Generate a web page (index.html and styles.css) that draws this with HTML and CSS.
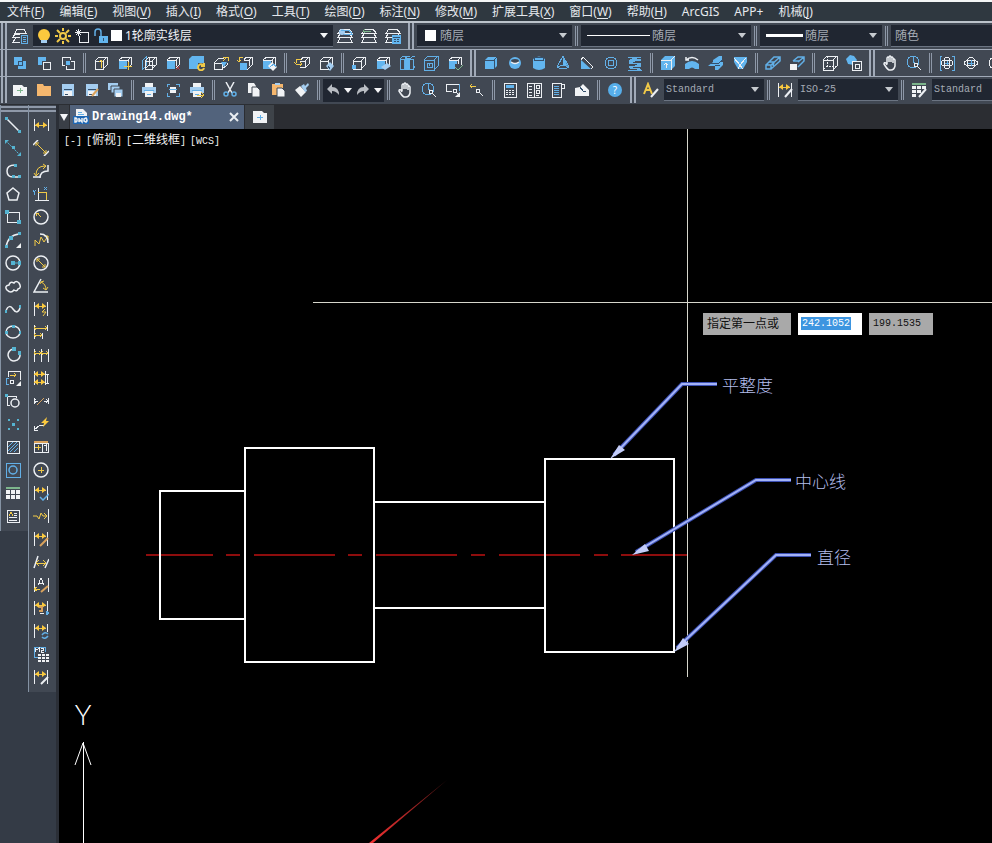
FILE: index.html
```html
<!DOCTYPE html>
<html lang="zh-CN">
<head>
<meta charset="utf-8">
<meta name="viewport" content="width=device-width, initial-scale=1">
<title>Drawing14.dwg</title>
<link rel="stylesheet" href="styles.css">
</head>
<body>
<svg class="sprite" aria-hidden="true">
  <symbol id="cube" viewBox="0 0 16 16"><path d="M2 6h8v8H2zM2 6l4-4h8v8l-4 4M10 6l4-4"/></symbol>
  <symbol id="box" viewBox="0 0 16 16"><path class="fb" d="M2 6h8v8H2z"/><path class="w" d="M2 5l4-3h8v8l-3 3M11 5l3-3M2 5h9v8"/></symbol>
  <symbol id="dim" viewBox="0 0 16 16"><path class="w" d="M1 1v14M14 1v14"/><path class="y" d="M2 5h11"/><path class="fy" d="M2 5l4-3v6zM13 5l-4-3v6z"/></symbol>
  <symbol id="hand" viewBox="0 0 16 16"><path class="ws" d="M5 9V3q1-2 2 0v4V2q1-2 2 0v5V3q1-2 2 0v5-3q1-2 2 0v6q-1 4-4 4H7Q5 14 2 9q0-2 2-1l1 2"/></symbol>
  <symbol id="zoomrt" viewBox="0 0 16 16"><circle class="b" cx="7" cy="7" r="6"/><path class="b" d="M7 2v5l4 2"/><circle class="w" cx="10" cy="10" r="2"/><path class="w" d="M12 12l3 3"/></symbol>
  <symbol id="layers" viewBox="0 0 16 16"><path class="w" d="M4 1h8l3 4H1zM3 6l-2 3h14l-2-3M3 10l-2 4h14l-2-4"/></symbol>
  <symbol id="printer" viewBox="0 0 16 16"><path class="fw" d="M4 1h8v4H4z"/><path class="fl" d="M1 5h14v6H1z"/><path class="fw" d="M4 9h8v6H4z"/><path class="b" d="M3 8h10M6 12h4"/></symbol>
  <symbol id="disk" viewBox="0 0 16 16"><path class="fl" d="M2 2h12v12H2z"/><path class="fw" d="M4 9h8v5H4z"/><path class="d" d="M4 7h8M5 12h3"/></symbol>
</svg>

<nav class="menu" aria-label="主菜单">
  <a href="#">文件(<u>F</u>)</a><a href="#">编辑(<u>E</u>)</a><a href="#">视图(<u>V</u>)</a><a href="#">插入(<u>I</u>)</a><a href="#">格式(<u>O</u>)</a><a href="#">工具(<u>T</u>)</a><a href="#">绘图(<u>D</u>)</a><a href="#">标注(<u>N</u>)</a><a href="#">修改(<u>M</u>)</a><a href="#">扩展工具(<u>X</u>)</a><a href="#">窗口(<u>W</u>)</a><a href="#">帮助(<u>H</u>)</a><a href="#">ArcGIS</a><a href="#">APP+</a><a href="#">机械(<u>J</u>)</a>
</nav>

<div class="bar" role="toolbar" aria-label="图层和特性">
  <span class="grip"></span>
  <button class="tool" aria-label="图层特性管理器"><svg viewBox="0 0 16 16"><path class="w" d="M3 5l2-4h7l2 4zM8 6H3L1 9h7M4 10l-3 4h7"/><path class="fd b" d="M9 7h6v8H9z"/><path class="b" d="M11 9h3M11 11h3M11 13h3"/></svg></button>
  <div class="combo layer">
    <svg viewBox="0 0 16 16"><circle class="fy" cx="8" cy="7" r="6"/><path class="fl" d="M5 12h6v3H5z"/></svg>
    <svg viewBox="0 0 16 16"><circle class="y2" cx="8" cy="8" r="3"/><path class="y2" d="M8 0v3M8 13v3M0 8h3M13 8h3M2 2l3 3M11 11l3 3M14 2l-3 3M5 11l-3 3"/></svg>
    <svg viewBox="0 0 16 16"><path class="w" d="M8 4h6v10H5V8"/><path class="w thin" d="M4 1v7M1 4h7M2 2l5 5M7 2L2 7"/></svg>
    <svg viewBox="0 0 16 16"><path class="b2" d="M2 8V4q0-3 3-3t3 3v4"/><path class="fb" d="M6 8h9v7H6z"/><path class="d" d="M10 10v3"/></svg>
    <span class="swatch"></span>
    <select aria-label="图层"><option>1轮廓实线层</option></select>
  </div>
  <button class="tool" aria-label="置为当前"><svg viewBox="0 0 16 16"><use href="#layers"/><circle class="fl" cx="5" cy="4" r="3"/><path class="b" d="M4 2h8l3 4H7"/></svg></button>
  <button class="tool" aria-label="上一个图层"><svg viewBox="0 0 16 16"><use href="#layers"/><path class="g" d="M10 3H2M4 1L2 3l2 2"/></svg></button>
  <button class="tool" aria-label="图层状态"><svg viewBox="0 0 16 16"><use href="#layers"/><path class="fb" d="M7 7h9v9H7z"/><path class="d" d="M8 9h7M9 11h2M12 11h2M9 13h2M12 13h2"/></svg></button>
  <span class="sep wide"></span>
  <div class="combo color"><span class="swatch"></span><select aria-label="颜色"><option>随层</option></select></div>
  <span class="sep"></span>
  <div class="combo ltype"><span class="rule"></span><select aria-label="线型"><option>随层</option></select></div>
  <span class="sep"></span>
  <div class="combo weight"><span class="rule thick"></span><select aria-label="线宽"><option>随层</option></select></div>
  <span class="sep"></span>
  <div class="combo rest"><select aria-label="打印样式"><option>随色</option></select></div>
</div>

<div class="bar" role="toolbar" aria-label="建模">
  <span class="grip"></span>
  <button class="tool" aria-label="并集"><svg viewBox="0 0 16 16"><path class="fb" d="M2 2h8v8H2zM6 6h8v8H6z"/><path class="d" d="M6 6h4v4H6z"/></svg></button>
  <button class="tool" aria-label="差集"><svg viewBox="0 0 16 16"><path class="fb" d="M2 2h8v4H6v4H2z"/><path class="w" d="M7 7h7v7H7z"/></svg></button>
  <button class="tool" aria-label="交集"><svg viewBox="0 0 16 16"><path class="w" d="M5 10H2V2h8v3M11 6h3v8H6v-3"/><path class="fb" d="M6 6h4v4H6z"/></svg></button>
  <span class="sep"></span>
  <button class="tool" aria-label="拉伸面"><svg viewBox="0 0 16 16"><use class="w" href="#cube"/><path class="y" d="M8 13V5M6 7l2-2 2 2"/></svg></button>
  <button class="tool" aria-label="移动面"><svg viewBox="0 0 16 16"><use href="#box"/><path class="y" d="M11 7v8M7 11h8"/></svg></button>
  <button class="tool" aria-label="偏移面"><svg viewBox="0 0 16 16"><path class="b" d="M1 6l4-4v9l-4 4z"/><path class="w" d="M4 6h7v8H4zM4 6l4-4h7v8l-4 4M11 6l4-4M8 2v8h7M4 14l4-4"/></svg></button>
  <button class="tool" aria-label="删除面"><svg viewBox="0 0 16 16"><use href="#box"/><path class="r" d="M11 11l4 4M15 11l-4 4"/></svg></button>
  <button class="tool" aria-label="旋转面"><svg viewBox="0 0 16 16"><path class="fb" d="M0 4l3-3h12v10l-3 3H0z"/><path class="fd" d="M9 8h7v8H9z"/><path class="y2" d="M14 10a3 3 0 1 0 1 3M15 8v3h-3"/></svg></button>
  <button class="tool" aria-label="倾斜面"><svg viewBox="0 0 16 16"><path class="w" d="M1 8h8v6H1zM1 8l5-5h5M9 14l5-4V8"/><path class="fb" d="M8 7h6l-3 5z"/><path class="y" d="M10 6l4-4M10 2h5v4"/></svg></button>
  <button class="tool" aria-label="复制面"><svg viewBox="0 0 16 16"><path class="fb" d="M3 8h7v7H3z"/><path class="w" d="M7 5l2-3h6v8l-5 5M7 5h5v6M12 5l3-3"/><path class="y" d="M6 2H2v5M0 5l2 2 2-2"/></svg></button>
  <button class="tool" aria-label="着色面"><svg viewBox="0 0 16 16"><use href="#box"/><path class="fw" d="M7 11l4-4 5 5-4 4z"/><path class="b" d="M9 12l4-3 2 3"/></svg></button>
  <span class="sep"></span>
  <button class="tool" aria-label="复制边"><svg viewBox="0 0 16 16"><path class="w" d="M6 12h5V6H6M7 5l2-3h6v7l-4 4M11 6l4-4"/><path class="y" d="M7 4H2v4M0 7l2 2h6M6 7l2 2-2 2"/></svg></button>
  <button class="tool" aria-label="着色边"><svg viewBox="0 0 16 16"><use class="w" href="#cube"/><path class="fl" d="M8 11l4-4 4 4-4 5z"/><path class="d" d="M10 11l2 3"/></svg></button>
  <span class="sep"></span>
  <button class="tool" aria-label="压印"><svg viewBox="0 0 16 16"><use class="w" href="#cube"/><path class="fb" d="M1 10h4v4H1z"/></svg></button>
  <button class="tool" aria-label="清除"><svg viewBox="0 0 16 16"><use href="#box"/><path class="fl" d="M6 12l6-4 4 3-6 4z"/></svg></button>
  <button class="tool" aria-label="分割"><svg viewBox="0 0 16 16"><path class="fb" d="M6 3h5v12H6z"/><path class="b" d="M1 4h4v10H1zM1 4l3-3h3M11 4h3v10h-4M11 4l3-3h2v10l-2 3M6 4l2-3h3"/></svg></button>
  <button class="tool" aria-label="抽壳"><svg viewBox="0 0 16 16"><path class="b" d="M1 5h10v10H1zM1 5l4-4h10v10l-4 4M11 5l4-4M4 8h5v4H4zM6 8v3"/></svg></button>
  <button class="tool" aria-label="检查"><svg viewBox="0 0 16 16"><use href="#box"/><path class="fd" d="M8 9h6v6H8z"/><path class="g" d="M8 12l3 3 5-5"/></svg></button>
  <span class="sep wide"></span>
  <button class="tool" aria-label="长方体"><svg viewBox="0 0 16 16"><path class="fb" d="M2 5l3-3h9v9l-3 3H2z"/><path class="d" d="M2 5h9v9M11 5l3-3"/></svg></button>
  <button class="tool" aria-label="球体"><svg viewBox="0 0 16 16"><ellipse class="fb" cx="8" cy="8" rx="6" ry="6"/><ellipse class="fd" cx="8" cy="6" rx="4" ry="2"/><path class="ws" d="M4 7q4 3 8 0"/></svg></button>
  <button class="tool" aria-label="圆柱体"><svg viewBox="0 0 16 16"><path class="fb" d="M2 4q6-5 12 0v9q-6 4-12 0z"/><ellipse class="d" cx="8" cy="4" rx="5" ry="2"/></svg></button>
  <button class="tool" aria-label="圆锥体"><svg viewBox="0 0 16 16"><path class="b" d="M8 1L2 12q6 4 12 0zM2 12q6-3 12 0"/><path class="fb" d="M8 2l5 9-5-1z"/></svg></button>
  <button class="tool" aria-label="楔体"><svg viewBox="0 0 16 16"><path class="fb" d="M2 5l10 9H2z"/><path class="w thin" d="M2 5l2-3 10 10-2 2"/></svg></button>
  <button class="tool" aria-label="圆环体"><svg viewBox="0 0 16 16"><circle class="b" cx="8" cy="8" r="6"/><circle class="b" cx="8" cy="8" r="3"/></svg></button>
  <button class="tool" aria-label="螺旋"><svg viewBox="0 0 16 16"><path class="b" d="M1 2h13M2 5h12M2 8h12M2 11h12M1 15h14M1 2l13 3M14 5L2 7l12 3M14 10L2 12l12 3"/><path class="b" d="M3 4h10M3 13h10"/></svg></button>
  <span class="sep"></span>
  <button class="tool" aria-label="拉伸"><svg viewBox="0 0 16 16"><path class="fb" d="M1 5l4-4h10v10l-4 4H1z"/><path class="w thin" d="M1 5h10v10M11 5l4-4M6 13V8M4 10l2-2 2 2"/></svg></button>
  <button class="tool" aria-label="旋转"><svg viewBox="0 0 16 16"><path class="ws" d="M2 5q6-5 12 0M2 2v3h3"/><path class="fb" d="M1 9q7-6 14 0v5h-4q-3-3-6 0H1z"/></svg></button>
  <button class="tool" aria-label="扫掠"><svg viewBox="0 0 16 16"><path class="fb" d="M5 5l6-4h3v5l-2 1h3v3l-5 5H7v-4H0l5-4z"/><path class="d" d="M2 8h9l4-3M7 11l5-1"/></svg></button>
  <button class="tool" aria-label="放样"><svg viewBox="0 0 16 16"><path class="fb" d="M2 2h13v5l-4 7H6L2 7z"/><path class="w thin" d="M2 3l6 7 6-7M6 14l2-4 3 4"/></svg></button>
  <span class="sep"></span>
  <button class="tool" aria-label="多段体"><svg viewBox="0 0 16 16"><path class="b2" d="M1 10h5v4H1zM1 10l8-8h6v4l-9 8M6 10l9-8M4 7h5l-1 4"/></svg></button>
  <button class="tool" aria-label="按住并拖动"><svg viewBox="0 0 16 16"><path class="b2" d="M4 6l5-4h6v4l-6 6M9 7l6-5M4 6h6"/><path class="fw" d="M1 9h7v6H1z"/></svg></button>
  <span class="sep"></span>
  <button class="tool" aria-label="截面"><svg viewBox="0 0 16 16"><path class="w" d="M1 5h10v10H1zM1 5l4-4h10v10l-4 4M11 5l4-4"/><path class="w dots" d="M5 1v10h10M5 11l-4 4"/></svg></button>
  <button class="tool" aria-label="实体编辑"><svg viewBox="0 0 16 16"><path class="fb" d="M0 4l4-4 4 1 3 4-3 5-6-1z"/><path class="fd w" d="M6 6h9v9H6z"/><path class="w" d="M9 9h4v4H9z"/></svg></button>
  <span class="sep wide"></span>
  <button class="tool" aria-label="平移"><svg viewBox="0 0 16 16"><use href="#hand"/></svg></button>
  <button class="tool" aria-label="缩放"><svg viewBox="0 0 16 16"><use href="#zoomrt"/></svg></button>
  <span class="sep"></span>
  <button class="tool" aria-label="受约束的动态观察"><svg viewBox="0 0 16 16"><path class="b" d="M3 1H1v14h2M13 1h2v14h-2"/><ellipse class="w" cx="8" cy="8" rx="6" ry="3"/><ellipse class="w" cx="8" cy="8" rx="3" ry="6"/><path class="b" d="M8 6v4M6 8h4"/></svg></button>
  <button class="tool" aria-label="自由动态观察"><svg viewBox="0 0 16 16"><ellipse class="w" cx="8" cy="8" rx="7" ry="3"/><ellipse class="w" cx="8" cy="8" rx="4" ry="6"/><path class="b" d="M8 5v6M5 8h6"/></svg></button>
  <button class="tool" aria-label="连续动态观察"><svg viewBox="0 0 16 16"><circle class="w" cx="8" cy="8" r="6"/></svg></button>
</div>

<div class="bar" role="toolbar" aria-label="标准和样式">
  <span class="grip"></span>
  <button class="tool" aria-label="新建"><svg viewBox="0 0 16 16"><path class="fw" d="M1 3h9l2 2h3v9H1z"/><path class="g" d="M8 6v5M5 8h6"/></svg></button>
  <button class="tool" aria-label="打开"><svg viewBox="0 0 16 16"><path class="fo" d="M1 2h6l1 2h7v10H1z"/></svg></button>
  <button class="tool" aria-label="保存"><svg viewBox="0 0 16 16"><use href="#disk"/></svg></button>
  <button class="tool" aria-label="另存为"><svg viewBox="0 0 16 16"><use href="#disk"/><path class="o2" d="M8 14l6-7"/></svg></button>
  <button class="tool" aria-label="全部保存"><svg viewBox="0 0 16 16"><path class="fl" d="M0 1h10v7H0z"/><path class="fl ds" d="M3 4h9v7H3z"/><path class="fl ds" d="M6 7h9v8H6z"/><path class="fw" d="M8 11h5v4H8z"/></svg></button>
  <span class="sep"></span>
  <button class="tool" aria-label="打印"><svg viewBox="0 0 16 16"><use href="#printer"/></svg></button>
  <button class="tool" aria-label="打印预览"><svg viewBox="0 0 16 16"><path class="b" d="M5 2H2v3M11 2h3v3M2 11v3h3M14 11v3h-3"/><path class="fw" d="M5 5h6v6H5z"/><path class="b" d="M4 7h8"/></svg></button>
  <button class="tool" aria-label="发布"><svg viewBox="0 0 16 16"><use href="#printer"/><path class="y" d="M8 13h7M12 10l3 3-3 3"/></svg></button>
  <span class="sep"></span>
  <button class="tool" aria-label="剪切"><svg viewBox="0 0 16 16"><path class="ws" d="M4 0l6 11M12 0L6 11"/><circle class="b2" cx="4" cy="12" r="2"/><circle class="b2" cx="12" cy="12" r="2"/></svg></button>
  <button class="tool" aria-label="复制"><svg viewBox="0 0 16 16"><path class="fw" d="M2 1h6l2 3v7H2z"/><path class="fw ds" d="M6 5h5l3 3v7H6z"/></svg></button>
  <button class="tool" aria-label="粘贴"><svg viewBox="0 0 16 16"><path class="fo" d="M2 2h11v11H2z"/><path class="fl" d="M5 1h5v2H5z"/><path class="fw ds" d="M7 6h5l3 3v6H7z"/></svg></button>
  <button class="tool" aria-label="特性匹配"><svg viewBox="0 0 16 16"><path class="fw" d="M1 8l5-4 6 6-5 5z"/><path class="fl" d="M7 4l3-2 1 2 3-3 1 2-3 3 1 3-2 1z"/></svg></button>
  <span class="sep"></span>
  <div class="history">
    <button class="tool" aria-label="放弃"><svg viewBox="0 0 16 16"><path class="fg" d="M7 2v3q7 0 7 8-3-4-7-4v3L2 7z"/></svg></button>
    <button class="drop" aria-label="放弃列表"></button>
    <button class="tool" aria-label="重做"><svg viewBox="0 0 16 16"><path class="fg" d="M9 2v3q-7 0-7 8 3-4 7-4v3l5-5z"/></svg></button>
    <button class="drop" aria-label="重做列表"></button>
  </div>
  <span class="sep"></span>
  <button class="tool" aria-label="实时平移"><svg viewBox="0 0 16 16"><use href="#hand"/></svg></button>
  <button class="tool" aria-label="实时缩放"><svg viewBox="0 0 16 16"><use href="#zoomrt"/></svg></button>
  <button class="tool" aria-label="窗口缩放"><svg viewBox="0 0 16 16"><path class="b" d="M1 2h13v7"/><path class="w" d="M1 2v7h6M1 2h13"/><circle class="w" cx="10" cy="9" r="2"/><path class="w" d="M12 11l3 3"/><path class="fw" d="M15 10v5h-5z"/></svg></button>
  <button class="tool" aria-label="缩放上一个"><svg viewBox="0 0 16 16"><path class="y" d="M7 4H1M3 2L1 4l2 2"/><circle class="w" cx="9" cy="9" r="2"/><path class="w" d="M11 11l3 3"/></svg></button>
  <span class="sep"></span>
  <button class="tool" aria-label="特性"><svg viewBox="0 0 16 16"><path class="w" d="M2 1h12v14H2z"/><path class="fb" d="M4 3h8v3H4z"/><path class="w dots" d="M4 8h8M4 10h8M4 12h8"/></svg></button>
  <button class="tool" aria-label="设计中心"><svg viewBox="0 0 16 16"><path class="w" d="M1 1h14v14H1zM8 1v14M10 3h3v3h-3zM10 8h3v3h-3zM3 4h3M3 7h3M3 10h3M3 13h3M10 13h3"/></svg></button>
  <button class="tool" aria-label="工具选项板"><svg viewBox="0 0 16 16"><path class="w" d="M2 1h9v14H2zM11 2h3v4h-3"/><path class="b" d="M4 4h5M4 6h5M4 8h5M4 10h5M4 12h5"/></svg></button>
  <button class="tool" aria-label="标记集"><svg viewBox="0 0 16 16"><path class="fw" d="M1 6l5-1 3-3 6 6v6H1z"/><path class="d" d="M6 5l3 4h3"/></svg></button>
  <span class="sep"></span>
  <button class="tool" aria-label="帮助"><span class="help">?</span></button>
  <span class="sep wide"></span>
  <button class="tool" aria-label="文字样式"><svg viewBox="0 0 16 16"><path class="y2" d="M1 12L5 2l4 10M3 8h5"/><path class="w2" d="M8 15l7-8"/></svg></button>
  <div class="combo style"><select aria-label="文字样式"><option>Standard</option></select></div>
  <span class="sep"></span>
  <button class="tool" aria-label="标注样式"><svg viewBox="0 0 16 16"><use href="#dim"/><path class="w2" d="M8 15l7-8"/></svg></button>
  <div class="combo style"><select aria-label="标注样式"><option>ISO-25</option></select></div>
  <span class="sep"></span>
  <button class="tool" aria-label="表格样式"><svg viewBox="0 0 16 16"><path class="g2" d="M1 2h14"/><path class="fw" d="M1 4h4v3H1zM6 4h4v3H6zM11 4h4v3h-4zM1 8h4v3H1zM6 8h4v3H6zM1 12h4v3H1z"/><path class="w2" d="M8 15l7-8"/></svg></button>
  <div class="combo style rest"><select aria-label="表格样式"><option>Standard</option></select></div>
</div>

<main class="work">
  <aside class="palettes">
    <div class="palette" role="toolbar" aria-label="绘图">
      <button class="ptool" aria-label="直线"><svg viewBox="0 0 16 16"><path class="ws" d="M2 2l12 12"/><path class="fc" d="M0 0h3v3H0zM13 13h3v3h-3z"/></svg></button>
      <button class="ptool" aria-label="构造线"><svg viewBox="0 0 16 16"><path class="c dots" d="M1 1l14 14"/><path class="fc" d="M0 0h4L0 4zM16 16h-4l4-4zM7 6h3v3H7z"/></svg></button>
      <button class="ptool" aria-label="多段线"><svg viewBox="0 0 16 16"><path class="ws" d="M10 2Q2 2 2 8t6 6h5"/><path class="fc" d="M9 1h3v3H9zM7 12h3v3H7zM13 12h3v3h-3z"/></svg></button>
      <button class="ptool" aria-label="正多边形"><svg viewBox="0 0 16 16"><path class="ws" d="M8 2l6 5-2 7H4L2 7z"/></svg></button>
      <button class="ptool" aria-label="矩形"><svg viewBox="0 0 16 16"><path class="w" d="M2 3h12v10H2z"/><path class="fc" d="M0 1h4v4H0zM12 11h4v4h-4z"/></svg></button>
      <button class="ptool" aria-label="圆弧"><svg viewBox="0 0 16 16"><path class="ws" d="M1 15Q3 3 14 2"/><path class="fc" d="M0 13h3v3H0zM4 4h4v4H4zM13 0h3v3h-3z"/><path class="fw" d="M16 11v5h-5z"/></svg></button>
      <button class="ptool" aria-label="圆"><svg viewBox="0 0 16 16"><circle class="ws" cx="8" cy="8" r="7"/><path class="c" d="M8 8h6"/><path class="fc" d="M6 6h4v4H6zM13 6h3v4h-3z"/></svg></button>
      <button class="ptool" aria-label="修订云线"><svg viewBox="0 0 16 16"><path class="ws" d="M2 12q-3-4 2-5 1-4 5-2 2-3 5 0 3 5-1 6-1 3-4 1-3 4-7 0z"/></svg></button>
      <button class="ptool" aria-label="样条曲线"><svg viewBox="0 0 16 16"><path class="ws" d="M1 10C3 4 6 5 8 8s5 5 7-1"/><path class="fc" d="M0 9h2v3H0zM14 4h2v3h-2z"/></svg></button>
      <button class="ptool" aria-label="椭圆"><svg viewBox="0 0 16 16"><ellipse class="ws" cx="8" cy="8" rx="7" ry="6"/><path class="fc" d="M7 1h3v3H7zM0 7h3v3H0zM14 7h2v3h-2z"/></svg></button>
      <button class="ptool" aria-label="椭圆弧"><svg viewBox="0 0 16 16"><path class="ws" d="M8 2a6 6 0 1 0 7 5"/><path class="fc" d="M7 0h4v4H7zM13 4h3v4h-3z"/></svg></button>
      <button class="ptool" aria-label="插入块"><svg viewBox="0 0 16 16"><path class="w" d="M3 7V1h12v9"/><path class="b" d="M4 8H1v6h3"/><path class="y" d="M5 5h6M9 3l2 2-2 2"/><circle class="w" cx="7" cy="12" r="2"/><path class="fw" d="M16 11v5h-5z"/></svg></button>
      <button class="ptool" aria-label="创建块"><svg viewBox="0 0 16 16"><path class="w" d="M5 12H2V3h9v2"/><circle class="ws" cx="10" cy="10" r="4"/><path class="fc" d="M0 1h3v3H0z"/></svg></button>
      <button class="ptool" aria-label="点"><svg viewBox="0 0 16 16"><path class="fc" d="M3 3h2v2H3zM12 3h2v2h-2zM7 7h3v3H7zM3 12h2v2H3zM12 12h2v2h-2z"/></svg></button>
      <button class="ptool" aria-label="图案填充"><svg viewBox="0 0 16 16"><path class="w" d="M2 2h12v12H2z"/><path class="b" d="M3 8l5-5M3 12l9-9M5 13l8-8M9 13l4-4"/></svg></button>
      <button class="ptool" aria-label="面域"><svg viewBox="0 0 16 16"><path class="b" d="M1 1h14v14H1z"/><circle class="bs" cx="8" cy="8" r="4"/></svg></button>
      <button class="ptool" aria-label="表格"><svg viewBox="0 0 16 16"><path class="g2" d="M1 3h14"/><path class="fw" d="M1 5h4v4H1zM6 5h4v4H6zM11 5h4v4h-4zM1 10h4v4H1zM6 10h4v4H6zM11 10h4v4h-4z"/></svg></button>
      <button class="ptool" aria-label="多行文字"><svg viewBox="0 0 16 16"><path class="w" d="M2 2h12v12H2zM4 9h8M4 12h8M9 5h3M9 7h3"/><path class="y" d="M4 8l2-4 2 4"/></svg></button>
    </div>
    <div class="palette" role="toolbar" aria-label="标注">
      <button class="ptool" aria-label="线性"><svg viewBox="0 0 16 16"><path class="w" d="M1 2v12M15 2v12"/><path class="y" d="M2 8h12"/><path class="fy" d="M2 8l4-3v6zM14 8l-4-3v6z"/></svg></button>
      <button class="ptool" aria-label="对齐"><svg viewBox="0 0 16 16"><path class="ws" d="M0 5l5-5M11 16l5-5"/><path class="ys" d="M3 3l10 10M3 6V3h3M10 13h3v-3"/></svg></button>
      <button class="ptool" aria-label="弧长"><svg viewBox="0 0 16 16"><path class="ws" d="M7 15q0-7 8-7V2M0 14h7"/><path class="ys" d="M3 12Q3 3 12 3M1 10l2 3 3-3M10 1l3 2-3 3"/></svg></button>
      <button class="ptool" aria-label="坐标"><svg viewBox="0 0 16 16"><path class="w" d="M5 2v13M2 14h14"/><path class="y" d="M5 6h8v8"/><path class="b" d="M11 1l3 3M14 1l-3 3M0 4l1 2 2-2M1 6v3"/></svg></button>
      <button class="ptool" aria-label="半径"><svg viewBox="0 0 16 16"><circle class="ws" cx="8" cy="8" r="7"/><path class="y" d="M8 8L4 4M3 7V4h3"/></svg></button>
      <button class="ptool" aria-label="折弯"><svg viewBox="0 0 16 16"><path class="ys" d="M2 14V8l4 4 2-7 3 5 4-6M11 4h4v4"/><path class="ws" d="M7 2q8 0 8 9"/></svg></button>
      <button class="ptool" aria-label="直径"><svg viewBox="0 0 16 16"><circle class="ws" cx="8" cy="8" r="7"/><path class="ys" d="M4 4l8 8M4 7V4h3M9 12h3V9"/></svg></button>
      <button class="ptool" aria-label="角度"><svg viewBox="0 0 16 16"><path class="ws" d="M8 1L1 14h14"/><path class="ys" d="M8 4q5 2 5 8M7 6l1-2 3-1M10 10l3 2 2-3"/></svg></button>
      <button class="ptool" aria-label="快速标注"><svg viewBox="0 0 16 16"><use href="#dim"/><path class="ys" d="M12 8l-3 3h4l-3 4"/></svg></button>
      <button class="ptool" aria-label="基线"><svg viewBox="0 0 16 16"><path class="w" d="M1 1v14M14 1v6M9 9v6"/><path class="y" d="M1 4h13M3 2L1 4l2 2M12 2l2 2-2 2M1 11h8M3 9l-2 2 2 2M7 9l2 2-2 2"/></svg></button>
      <button class="ptool" aria-label="连续"><svg viewBox="0 0 16 16"><path class="w" d="M1 2v13M8 2v13M15 2v13"/><path class="y" d="M1 6h14M3 4L1 6l2 2M6 4l2 2-2 2M10 4L8 6l2 2M13 4l2 2-2 2"/></svg></button>
      <button class="ptool" aria-label="等距标注"><svg viewBox="0 0 16 16"><path class="w" d="M1 1v14M12 1v14M14 4v9M13 4h3M13 13h3"/><path class="y" d="M1 4h11M1 12h11"/><path class="fy" d="M1 4l4-3v6zM12 4L8 1v6zM1 12l4-3v6zM12 12L8 9v6z"/></svg></button>
      <button class="ptool" aria-label="折断标注"><svg viewBox="0 0 16 16"><path class="w" d="M1 5v6M15 5v6M1 8h4M3 6L1 8l2 2M15 8h-4M13 6l2 2-2 2"/><path class="o" d="M4 12l7-7"/></svg></button>
      <button class="ptool" aria-label="引线"><svg viewBox="0 0 16 16"><path class="w" d="M1 14l6-5h4M1 10v4h4"/><path class="fy" d="M14 1L8 7h3l-1 4 6-6h-3z"/></svg></button>
      <button class="ptool" aria-label="公差"><svg viewBox="0 0 16 16"><path class="o2" d="M1 3h14"/><path class="w" d="M1 4h14v9H1zM9 4v9M11 7l2-1v6"/><path class="y" d="M5 6v5M2 8h6"/></svg></button>
      <button class="ptool" aria-label="圆心标记"><svg viewBox="0 0 16 16"><circle class="ws" cx="8" cy="8" r="7"/><path class="y" d="M8 5v6M5 8h6"/></svg></button>
      <button class="ptool" aria-label="检验"><svg viewBox="0 0 16 16"><use href="#dim"/><path class="b2" d="M7 12l3 3 6-6"/></svg></button>
      <button class="ptool" aria-label="折弯线性"><svg viewBox="0 0 16 16"><path class="w" d="M15 1v14"/><path class="ys" d="M0 8h4l2 3 2-6 2 3h4M11 5l3 3-3 3"/></svg></button>
      <button class="ptool" aria-label="编辑标注"><svg viewBox="0 0 16 16"><use href="#dim"/><path class="o2" d="M7 15l8-8"/></svg></button>
      <button class="ptool" aria-label="倾斜"><svg viewBox="0 0 16 16"><path class="ws" d="M1 14L5 2M12 14l4-9"/><path class="y" d="M3 9h10M6 6L3 9l3 3M10 6l3 3-3 3"/></svg></button>
      <button class="ptool" aria-label="编辑标注文字"><svg viewBox="0 0 16 16"><path class="w" d="M1 1v14M15 1v14M5 8l3-7 3 7M6 6h4"/><path class="y" d="M1 12h6M4 10l-3 2 3 2"/><path class="o2" d="M8 15l7-6"/></svg></button>
      <button class="ptool" aria-label="替代"><svg viewBox="0 0 16 16"><use href="#dim"/><path class="o2" d="M6 7h3v4H6"/><path class="w" d="M7 13h4"/><path class="b" d="M13 11v4l3-2z"/></svg></button>
      <button class="ptool" aria-label="标注更新"><svg viewBox="0 0 16 16"><use href="#dim"/><path class="fd" d="M8 9h8v7H8z"/><path class="b2" d="M9 12q3-4 6-1M15 13q-3 4-6 1"/></svg></button>
      <button class="ptool" aria-label="面积"><svg viewBox="0 0 16 16"><path class="b" d="M5 11H1V1h11v5"/><path class="w" d="M2 6V2l2 2 2-2v4M8 2h2v2H8v2h3"/><path class="fw" d="M5 8h3v2H5zM9 8h3v2H9zM13 8h3v2h-3zM5 11h3v2H5zM9 11h3v2H9zM13 11h3v2h-3zM5 14h3v2H5zM9 14h3v2H9zM13 14h3v2h-3z"/></svg></button>
      <button class="ptool" aria-label="标注样式管理"><svg viewBox="0 0 16 16"><use href="#dim"/><path class="w2" d="M8 15l7-7"/></svg></button>
    </div>
  </aside>

  <section class="document">
    <div class="tabs">
      <button class="tablist drop" aria-label="文档列表"></button>
      <div class="tab">
        <svg viewBox="0 0 16 16" aria-hidden="true"><path class="fw" d="M3 0h7l4 4v6H3z"/><path class="b" d="M5 3h4M5 5h6"/><path class="fn" d="M0 7h16v8H0z"/><path class="ws" d="M2 9v4h1l1-1v-2L3 9zM6 9v4l1-2 2 2V9M14 10l-1-1-2 1v2l2 1 1-1v-1h-1"/></svg>
        <a href="#">Drawing14.dwg*</a>
        <button class="close" aria-label="关闭"><svg viewBox="0 0 10 10"><path class="w2" d="M1 1l8 8M9 1L1 9"/></svg></button>
      </div>
      <button class="newtab" aria-label="新建文档"><svg viewBox="0 0 16 16"><path class="fw" d="M1 2h9l2 2h3v10H1z"/><path class="b" d="M8 6v5M5 8h6"/></svg></button>
    </div>

    <div class="canvas">
      <svg class="drawing" viewBox="59 129 933 714" preserveAspectRatio="xMinYMin slice" role="img" aria-label="轴零件图">
        <defs><linearGradient id="fade" gradientUnits="userSpaceOnUse" x1="446" y1="781" x2="370" y2="843"><stop offset="0" stop-color="#601818"/><stop offset="1" stop-color="#f03030"/></linearGradient></defs>
        <path class="center" d="M146 555h67M226 555h14M254 555h81M348 555h14M376 555h81M471 555h14M499 555h81M594 555h14M621 555h67"/>
        <path class="part" d="M245 491h-85v128h85M245 448h129v214H245zM374 502h171M374 608h171M545 459h129v193H545z"/>
        <path class="cross" d="M687 129h1v548h-1zM313 302h679v1H313z"/>
        <path class="leader-glow" d="M717 384h-35l-68 71M791 480h-35L636 552M811 555h-35L677 648"/>
        <path class="leader" d="M717 384h-35l-68 71M791 480h-35L636 552M811 555h-35L677 648"/>
        <path class="head" d="M610 459l9-14 6 5zM632 555l13-11 4 7zM674 652l9-14 6 6z"/>
        <text class="note" x="722" y="392">平整度</text>
        <text class="note" x="795" y="488">中心线</text>
        <text class="note" x="817" y="564">直径</text>
        <text class="axis" x="83" y="725" text-anchor="middle">Y</text>
        <path class="ucs" d="M83 742h1v101h-1z"/>
        <path class="wing" d="M75 765l8-22 8 22"/>
        <path fill="url(#fade)" d="M447 780L373 843h-4z"/>
      </svg>
      <div class="viewlabel"><span>[-]</span><span>[<b>俯视</b>]</span><span>[<b>二维线框</b>]</span><span>[WCS]</span></div>
      <div class="prompt">
        <label for="px">指定第一点或</label>
        <div class="coord active"><input id="px" value="242.1052"></div>
        <div class="coord"><input aria-label="Y" value="199.1535"></div>
      </div>
    </div>
  </section>
</main>
</body>
</html>
```
FILE: styles.css
```css
* { box-sizing: border-box; }

body {
  margin: 0;
  min-height: 100vh;
  display: flex;
  flex-direction: column;
  overflow: hidden;
  border-top: 2px solid #f4f6f6;
  background: #2b2e33;
  color: #e6e9ee;
  font: 12px/16px "Noto Sans", "Noto Sans CJK SC", sans-serif;
}

button {
  padding: 0;
  border: 0;
  background: none;
  color: inherit;
  font: inherit;
}

a { color: inherit; text-decoration: none; }

svg { display: block; fill: none; }
.sprite { position: absolute; width: 0; height: 0; }

/* icon strokes and fills */
.w, .w2, .ws { stroke: #eceff3; }
.b, .b2, .bs { stroke: #62afe6; }
.c { stroke: #55b4d2; }
.y, .y2, .ys { stroke: #f0c948; }
.g, .g2 { stroke: #7db58c; }
.o, .o2 { stroke: #d9a25c; }
.r { stroke: #a8434a; }
.d { stroke: #35506c; }
.w, .b, .y, .g, .d { shape-rendering: crispEdges; }
.w2, .y2, .g2, .o2 { stroke-width: 2; }
.b2, .ws, .bs { stroke-width: 1.5; }
.dots { stroke-dasharray: 2 1; }
.fw { fill: #f1f3f5; }
.fb { fill: #62b5ef; }
.fl { fill: #a4cdf0; }
.fc { fill: #55b4d2; }
.fy { fill: #fbc93e; }
.fo { fill: #f5b76e; }
.fg { fill: #b9bdc3; }
.fn { fill: #1f68b5; }
.fd { fill: #414853; }
.ds { stroke: #414853; }

.menu {
  display: flex;
  gap: 15px;
  height: 21px;
  padding: 2px 7px 0;
  background: #2f3840;
  border-bottom: 2px solid #bcc3cb;
  white-space: nowrap;
}
.menu u { text-underline-offset: 2px; }

.bar {
  display: flex;
  align-items: center;
  height: 27px;
  border-bottom: 1px solid #a1aab8;
  background: #414853;
}
.bar > * { flex: none; }
.bar:nth-of-type(3) { border-bottom-color: #414853; }

.grip, .sep { border: solid #8e98a8; }
.sep {
  width: 3px;
  height: 20px;
  margin: 0 3px;
  border-width: 0 1px;
}
.grip, .sep.wide {
  width: 6px;
  height: 26px;
  border-width: 0 2px;
  border-color: #a1aab8;
}
.grip { margin: 0 1px; }

.tool {
  display: grid;
  place-items: center;
  width: 24px;
  height: 24px;
}
.tool svg, .combo svg, .ptool svg, .newtab svg, .tab > svg { width: 16px; height: 16px; }

.combo {
  position: relative;
  display: flex;
  align-items: center;
  height: 22px;
  border-bottom: 1px solid #6b7482;
  background: #202631;
  color: #a5abb5;
}
.combo::after, .drop::after {
  content: "";
  border: solid transparent;
  border-width: 5px 4px 0;
  border-top-color: #c6cacf;
}
.combo::after {
  position: absolute;
  right: 5px;
  top: 8px;
  pointer-events: none;
}
.combo select {
  flex: 1;
  min-width: 0;
  height: 20px;
  padding: 0 14px 0 2px;
  border: 0;
  appearance: none;
  background: none;
  color: inherit;
  font: inherit;
}
.swatch { width: 11px; height: 11px; background: #fff; }
.rule { width: 63px; height: 1px; background: #fff; }
.thick { width: 37px; height: 3px; }
.layer { width: 300px; margin-left: 1px; padding-left: 3px; gap: 3px; color: #f2f4f6; }
.layer select { padding-left: 0; }
.layer .swatch { margin-left: -1px; }
.layer::after, .drop::after { border-top-color: #f4f5f7; }
.color { width: 155px; padding-left: 8px; }
.color select { padding-left: 4px; }
.ltype { width: 170px; padding-left: 6px; }
.weight { width: 122px; padding-left: 6px; }
.style { width: 100px; margin-left: 1px; font: 10px/16px "Liberation Mono", monospace; }
.bar .rest { flex: 1 0 99px; padding-left: 2px; }
.bar .style.rest { padding-left: 0; }
.bar .rest::after { display: none; }

.history {
  display: flex;
  align-items: center;
  width: 61px;
  height: 23px;
  background: #202631;
}
.history .tool { width: 20px; }
.drop { display: grid; place-items: center; width: 10px; }

.help {
  width: 14px;
  height: 14px;
  border-radius: 50%;
  background: #56aeea;
  color: #fff;
  font-size: 10px;
  line-height: 14px;
}

.work { flex: 1; display: flex; margin-top: 1px; }

.palettes {
  display: flex;
  align-items: flex-start;
  width: 59px;
  flex: none;
  background: #343b46;
  border-right: 3px solid #2b2f37;
}
.palette {
  width: 28px;
  padding: 8px 2px 4px 0;
  border-left: 1px solid #8593a4;
  background: linear-gradient(#8f99a9 0 2px, transparent 2px 4px, #8f99a9 4px 6px, transparent 6px) 0 1px no-repeat #414853;
}
.ptool {
  display: grid;
  place-items: center;
  width: 24px;
  height: 23px;
}

.document { flex: 1; min-width: 0; display: flex; flex-direction: column; }
.tabs { display: flex; height: 24px; background: #2b2d32; }
.tablist { width: 10px; margin-right: 1px; background: #3a3f47; }
.tablist::after { border-width: 7px 4px 0; }
.tab {
  display: flex;
  align-items: center;
  gap: 3px;
  width: 174px;
  margin-right: 1px;
  padding: 0 5px 0 3px;
  background: #52637c;
  color: #fff;
  font: bold 12px/16px "Liberation Mono", monospace;
}
.tab a { flex: 1; }
.close svg { width: 10px; height: 10px; }
.newtab { display: grid; place-items: center; width: 29px; background: #3e4349; }

.canvas { position: relative; flex: 1; overflow: hidden; background: #000; }
.drawing { position: absolute; inset: 0; width: 100%; height: 100%; }
.part { stroke: #fff; stroke-width: 2; }
.center { stroke: #8e0d0d; stroke-width: 2; }
.cross { fill: #d6d6cc; }
.leader-glow { stroke: #3c50b4; stroke-width: 4; }
.leader { stroke: #a3b2f6; stroke-width: 2; }
.head { fill: #c3ccf8; }
.note { fill: #b4beec; font: 300 17px "Noto Sans CJK SC", sans-serif; }
.axis { fill: #fff; font: 300 28px Lato, sans-serif; }
.ucs { fill: #fff; }
.wing { stroke: #fff; }

.viewlabel {
  position: relative;
  display: flex;
  align-items: baseline;
  gap: 4px;
  padding: 2px 5px;
  color: #f2f2f2;
  font: 10px/16px "Liberation Mono", "Noto Sans CJK SC", monospace;
}
.viewlabel b { font: 12px/16px "Noto Sans CJK SC", sans-serif; }

.prompt {
  position: absolute;
  left: 644px;
  top: 184px;
  display: flex;
  gap: 7px;
  color: #111;
}
.prompt label, .coord { height: 22px; background: #a9a9a9; }
.prompt label { width: 88px; padding: 3px 4px; white-space: nowrap; }
.coord { width: 64px; padding: 4px 3px; }
.active { background: #fff; }
.coord input {
  display: block;
  width: 50px;
  height: 13px;
  padding: 0 1px;
  border: 0;
  background: none;
  color: #111;
  font: 10px/13px "Liberation Mono", monospace;
}
.active input { background: #3d95e0; color: #fff; }
```
